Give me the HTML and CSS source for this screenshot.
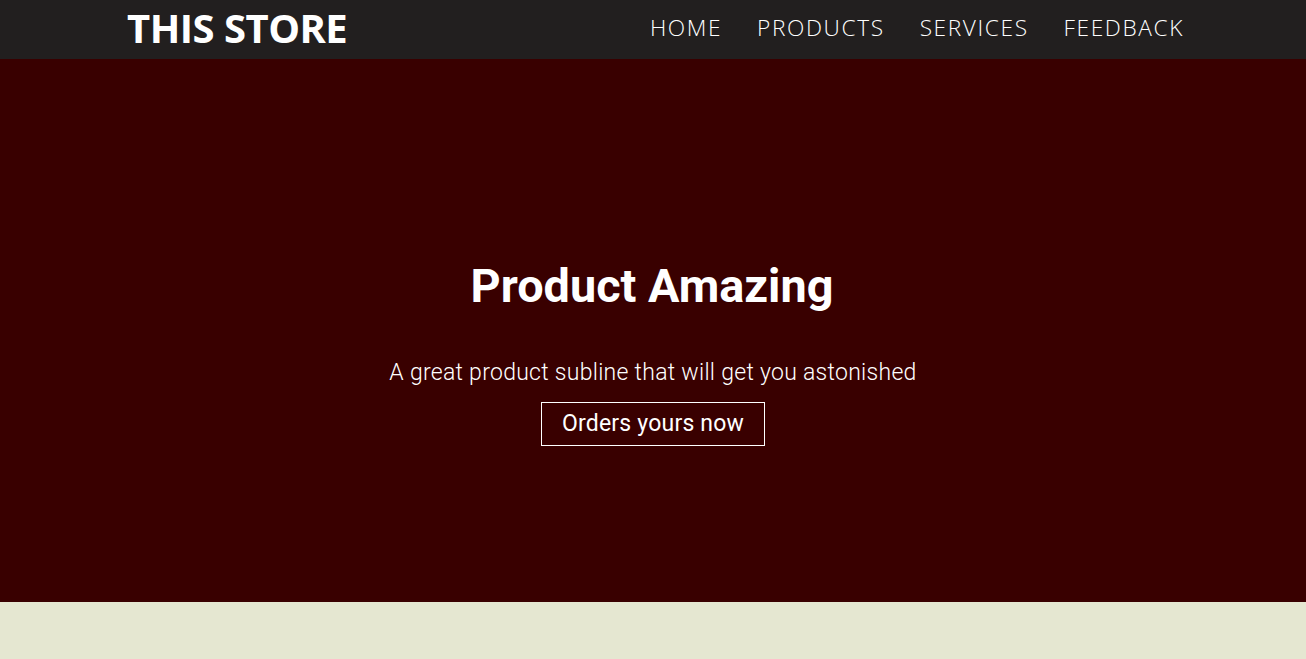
FILE: index.html
```html
<!DOCTYPE html>
<html>
<head>
<meta charset="utf-8">
<link rel="stylesheet" href="styles.css">
</head>
<body>
<header class="topbar">
  <div class="logo">THIS STORE</div>
  <nav class="nav">
    <a href="#">HOME</a>
    <a href="#">PRODUCTS</a>
    <a href="#">SERVICES</a>
    <a href="#">FEEDBACK</a>
  </nav>
</header>
<section class="hero">
  <h1 class="hero-title">Product Amazing</h1>
  <p class="hero-sub">A great product subline that will get you astonished</p>
  <a class="hero-btn" href="#">Orders yours now</a>
</section>
<section class="below"></section>
</body>
</html>
```
FILE: styles.css
```css
html, body { margin: 0; padding: 0; }
body { background: #e5e7d1; font-family: "Open Sans", sans-serif; }
.topbar {
  height: 59px;
  background: #221f1f;
  display: flex;
  align-items: center;
  justify-content: space-between;
  padding: 0 122px 0 127px;
}
.logo {
  color: #fff;
  font-family: "Open Sans", sans-serif;
  font-weight: 700;
  font-size: 40px;
  letter-spacing: -0.5px;
  line-height: 1;
  margin-top: -3px;
}
.nav { display: flex; gap: 35px; margin-top: -4px; }
.nav a {
  color: #fff;
  text-decoration: none;
  font-family: "Open Sans", sans-serif;
  font-weight: 300;
  font-size: 22.7px;
  letter-spacing: 1.6px;
}
.hero {
  height: 543px;
  background: #390000;
  display: flex;
  flex-direction: column;
  align-items: center;
  justify-content: center;
  color: #fff;
  font-family: Roboto, sans-serif;
  padding-top: 48px;
  box-sizing: border-box;
}
.hero-title {
  margin: 0 0 0 -2px;
  font-weight: 700;
  font-size: 46.8px;
  line-height: 1;
}
.hero-sub {
  margin: 51px 0 0;
  font-weight: 300;
  font-size: 23px;
  letter-spacing: 0.28px;
  line-height: 1;
}
.hero-btn {
  margin-top: 18px;
  border: 1px solid #fff;
  color: #fff;
  text-decoration: none;
  font-size: 23px;
  letter-spacing: 0.2px;
  padding: 8px 20px;
  line-height: 26px;
}
.below { height: 57px; }
```
